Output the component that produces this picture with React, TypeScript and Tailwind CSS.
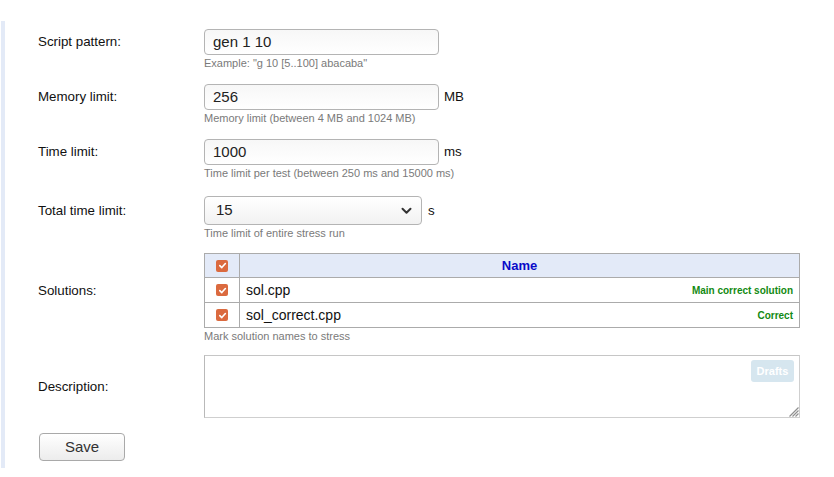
import React from "react";

// одна строка формы: подпись слева, поле справа, подсказка под полем
const Row = ({
  label,
  hint,
  className,
  children,
}: {
  label: string;
  hint?: string;
  className?: string;
  children: React.ReactNode;
}) => {
  return (
    <div className={`grid grid-cols-[166px_1fr] ${className ?? ""}`}>
      <div className="flex items-center text-[13.33px] text-[#111]">{label}</div>
      <div className="flex items-center">{children}</div>
      {hint && (
        <>
          <div />
          <div className="mt-[1px] h-[14px] text-[11px] leading-[14px] text-[#7a7a7a]">
            {hint}
          </div>
        </>
      )}
    </div>
  );
};

const Check = () => (
  <span className="inline-flex h-[12px] w-[12px] items-center justify-center rounded-[2px] bg-[#db6a3f]">
    <svg width="9" height="9" viewBox="0 0 10 10">
      <path
        d="M2 5.2 L4.2 7.3 L8.2 2.8"
        fill="none"
        stroke="white"
        strokeWidth="1.8"
        strokeLinecap="round"
        strokeLinejoin="round"
      />
    </svg>
  </span>
);

const TextInput = ({ value }: { value: string }) => (
  <div className="flex h-[26px] w-[235px] items-center rounded-[4px] border border-[#b4b4b4] bg-gradient-to-b from-[#f7f7f7] to-white px-[8px] text-[15px] text-[#222]">
    {value}
  </div>
);

export default function App() {
  return (
    <div className="h-[477px] w-[834px] bg-white pt-[21px] font-['Liberation_Sans',Arial,sans-serif]">
      <div className="ml-[1px] border-l-4 border-[#e3eaf7] pb-[7px] pl-[33px] pt-[8px]">
        <Row label="Script pattern:" hint={'Example: "g 10 [5..100] abacaba"'}>
          <TextInput value="gen 1 10" />
        </Row>

        <Row label="Memory limit:" hint="Memory limit (between 4 MB and 1024 MB)" className="mt-[14px]">
          <TextInput value="256" />
          <span className="ml-[5px] text-[13.33px] text-[#111]">MB</span>
        </Row>

        <Row
          label="Time limit:"
          hint="Time limit per test (between 250 ms and 15000 ms)"
          className="mt-[14px]"
        >
          <TextInput value="1000" />
          <span className="ml-[5px] text-[13.33px] text-[#111]">ms</span>
        </Row>

        <Row label="Total time limit:" hint="Time limit of entire stress run" className="mt-[16px]">
          <div className="flex h-[29px] w-[218px] items-center justify-between rounded-[4px] border border-[#b4b4b4] bg-gradient-to-b from-white to-[#f2f2f2] pl-[11px] pr-[9px] text-[15px] text-[#222]">
            <span>15</span>
            <svg width="11" height="8" viewBox="0 0 11 8">
              <path
                d="M1.5 1.8 L5.5 5.8 L9.5 1.8"
                fill="none"
                stroke="#333"
                strokeWidth="2"
                strokeLinecap="round"
                strokeLinejoin="round"
              />
            </svg>
          </div>
          <span className="ml-[6px] text-[13.33px] text-[#111]">s</span>
        </Row>

        <Row label="Solutions:" hint="Mark solution names to stress" className="mt-[13px]">
          <table className="w-[596px] border-collapse border border-[#ababab]">
            <thead>
              <tr className="h-[24px] bg-[#e3eaf8]">
                <th className="w-[35px] border border-[#ababab] p-0">
                  <div className="flex justify-center">
                    <Check />
                  </div>
                </th>
                <th className="border border-[#ababab] text-[13px] font-bold text-[#0a0ac8]">Name</th>
              </tr>
            </thead>
            <tbody>
              <tr className="h-[25px]">
                <td className="border border-[#ababab] p-0">
                  <div className="flex justify-center">
                    <Check />
                  </div>
                </td>
                <td className="border border-[#ababab] px-[6px]">
                  <div className="flex items-center justify-between">
                    <span className="text-[14px] text-[#111]">sol.cpp</span>
                    <span className="text-[10px] font-bold text-[#128a12]">Main correct solution</span>
                  </div>
                </td>
              </tr>
              <tr className="h-[25px]">
                <td className="border border-[#ababab] p-0">
                  <div className="flex justify-center">
                    <Check />
                  </div>
                </td>
                <td className="border border-[#ababab] px-[6px]">
                  <div className="flex items-center justify-between">
                    <span className="text-[14px] text-[#111]">sol_correct.cpp</span>
                    <span className="text-[10px] font-bold text-[#128a12]">Correct</span>
                  </div>
                </td>
              </tr>
            </tbody>
          </table>
        </Row>

        <Row label="Description:" className="mt-[12px]">
          <div className="relative h-[63px] w-[596px] border border-[#cfcfcf] border-l-[#b9b9b9] border-t-[#c6c6c6]">
            <span className="absolute right-[5px] top-[4px] flex h-[22px] w-[43px] items-center justify-center rounded-[3px] bg-[#d6e6ef] text-[11px] font-bold text-white">
              Drafts
            </span>
            <svg className="absolute bottom-0 right-0" width="13" height="13" viewBox="0 0 13 13">
              <path
                d="M12.5 3.5 L3.5 12.5 M12.5 6.5 L6.5 12.5 M12.5 9.5 L9.5 12.5"
                stroke="#8f8f8f"
                strokeWidth="1.2"
              />
            </svg>
          </div>
        </Row>

        <div className="mt-[15px] pl-[1px]">
          <button className="h-[28px] w-[86px] rounded-[4px] border border-[#a9a9a9] bg-gradient-to-b from-white to-[#ececec] text-[15px] text-[#333]">
            Save
          </button>
        </div>
      </div>
    </div>
  );
}
